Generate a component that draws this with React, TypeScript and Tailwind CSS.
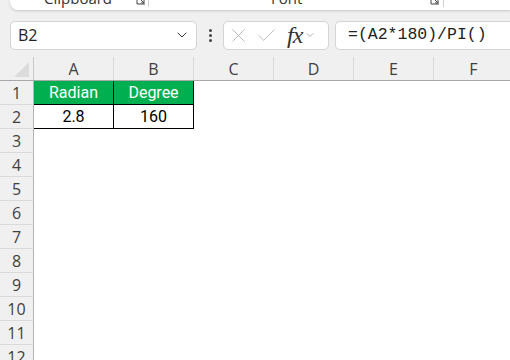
import { ChevronDown, X, Check } from "lucide-react";

const cols = ["A", "B", "C", "D", "E", "F"];
const rows = [1, 2, 3, 4, 5, 6, 7, 8, 9, 10, 11, 12];

const cells: Record<string, string> = {
  A1: "Radian",
  B1: "Degree",
  A2: "2.8",
  B2: "160",
};

function Launcher() {
  return (
    <svg width="10" height="10" viewBox="0 0 10 10" className="text-[#444]">
      <path d="M1 1v8h8" fill="none" stroke="currentColor" strokeWidth="1" />
      <path d="M3 3l5 5M5 8h3V5" fill="none" stroke="currentColor" strokeWidth="1" />
    </svg>
  );
}

function Cell({ col, row }: { col: string; row: number }) {
  const key = col + row;
  const text = cells[key];
  const header = row === 1 && text;
  const boxed = (col === "A" || col === "B") && row <= 2;
  return (
    <div
      className={
        "w-[80px] h-[24px] shrink-0 flex items-center justify-center text-[16px] " +
        (boxed ? "border-r border-b border-black " : "") +
        (header ? "bg-[#00b050] text-white" : "text-black")
      }
    >
      {text}
    </div>
  );
}

export default function App() {
  return (
    <div className="w-[510px] h-[360px] overflow-hidden bg-[#f0f0f0] font-['Roboto',sans-serif] flex flex-col">
      {/* ribbon bottom */}
      <div className="h-[20px] shrink-0 pl-[10px]">
        <div className="h-[10px] bg-white rounded-bl-[8px] shadow-[0_1px_3px_rgba(0,0,0,0.18)] flex items-end overflow-hidden">
          <div className="w-[138px] h-full relative">
            <span className="absolute left-[34px] -top-[13px] text-[15px] text-[#333] font-['Open_Sans',sans-serif]">Clipboard</span>
            <span className="absolute left-[126px] -top-[5px]"><Launcher /></span>
          </div>
          <div className="w-px h-[7px] self-start bg-[#d0d0d0]" />
          <div className="w-[294px] h-full relative">
            <span className="absolute left-[122px] -top-[13px] text-[15px] text-[#333] font-['Open_Sans',sans-serif]">Font</span>
            <span className="absolute left-[281px] -top-[5px]"><Launcher /></span>
          </div>
          <div className="w-px h-[7px] self-start bg-[#d0d0d0]" />
        </div>
      </div>

      {/* formula bar */}
      <div className="h-[30px] shrink-0 flex items-center pl-[10px]">
        <div className="w-[187px] h-[29px] bg-white border border-[#d4d4d4] rounded-[5px] flex items-center justify-between pl-[7px] pr-[6px]">
          <span className="text-[16px] text-[#222] font-['Open_Sans',sans-serif]">B2</span>
          <ChevronDown size={16} strokeWidth={1.5} className="text-[#333]" />
        </div>
        <div className="w-[26px] flex flex-col items-center gap-[2px]">
          <span className="w-[3px] h-[3px] bg-[#444] rounded-full" />
          <span className="w-[3px] h-[3px] bg-[#444] rounded-full" />
          <span className="w-[3px] h-[3px] bg-[#444] rounded-full" />
        </div>
        <div className="w-[106px] h-[29px] bg-white border border-[#d4d4d4] rounded-[5px] flex items-center pl-[3px]">
          <X size={23} strokeWidth={1} className="text-[#b8b8b8]" />
          <Check size={23} strokeWidth={1} className="text-[#b8b8b8] ml-[5px]" />
          <span className="ml-[9px] text-[24px] leading-none italic text-[#333] font-['Liberation_Serif',serif] tracking-[-1px]">fx</span>
          <ChevronDown size={12} strokeWidth={1.5} className="text-[#999] ml-[2px]" />
        </div>
        <div className="ml-[6px] flex-1 h-[29px] bg-white border border-[#d4d4d4] border-r-0 rounded-l-[5px] flex items-center pl-[12px]">
          <span className="text-[16.5px] text-[#222] font-['Liberation_Mono',monospace]">=(A2*180)/PI()</span>
        </div>
      </div>

      {/* sheet */}
      <div className="mt-[7px] flex flex-col">
        <div className="flex h-[24px] shrink-0 border-b border-[#a8a8a8]">
          <div className="w-[34px] shrink-0 h-full border-r border-[#c8c8c8] relative">
            <svg width="33" height="23" className="absolute left-0 top-0">
              <polygon points="14,20 29,20 29,5" fill="#dcdcdc" />
            </svg>
          </div>
          {cols.map((c) => (
            <div
              key={c}
              className="w-[80px] shrink-0 h-full border-r border-[#dadada] flex items-center justify-center text-[16px] text-[#3f3f3f] font-['Open_Sans',sans-serif]"
            >
              {c}
            </div>
          ))}
        </div>
        {rows.map((r) => (
          <div key={r} className="flex h-[24px] shrink-0 bg-white">
            <div className="w-[34px] shrink-0 h-full bg-[#f0f0f0] border-r border-b border-r-[#b4b4b4] border-b-[#dadada] flex items-center justify-center text-[16px] text-[#3f3f3f] font-['Open_Sans',sans-serif]">
              {r}
            </div>
            {cols.map((c) => (
              <Cell key={c} col={c} row={r} />
            ))}
          </div>
        ))}
      </div>
    </div>
  );
}
